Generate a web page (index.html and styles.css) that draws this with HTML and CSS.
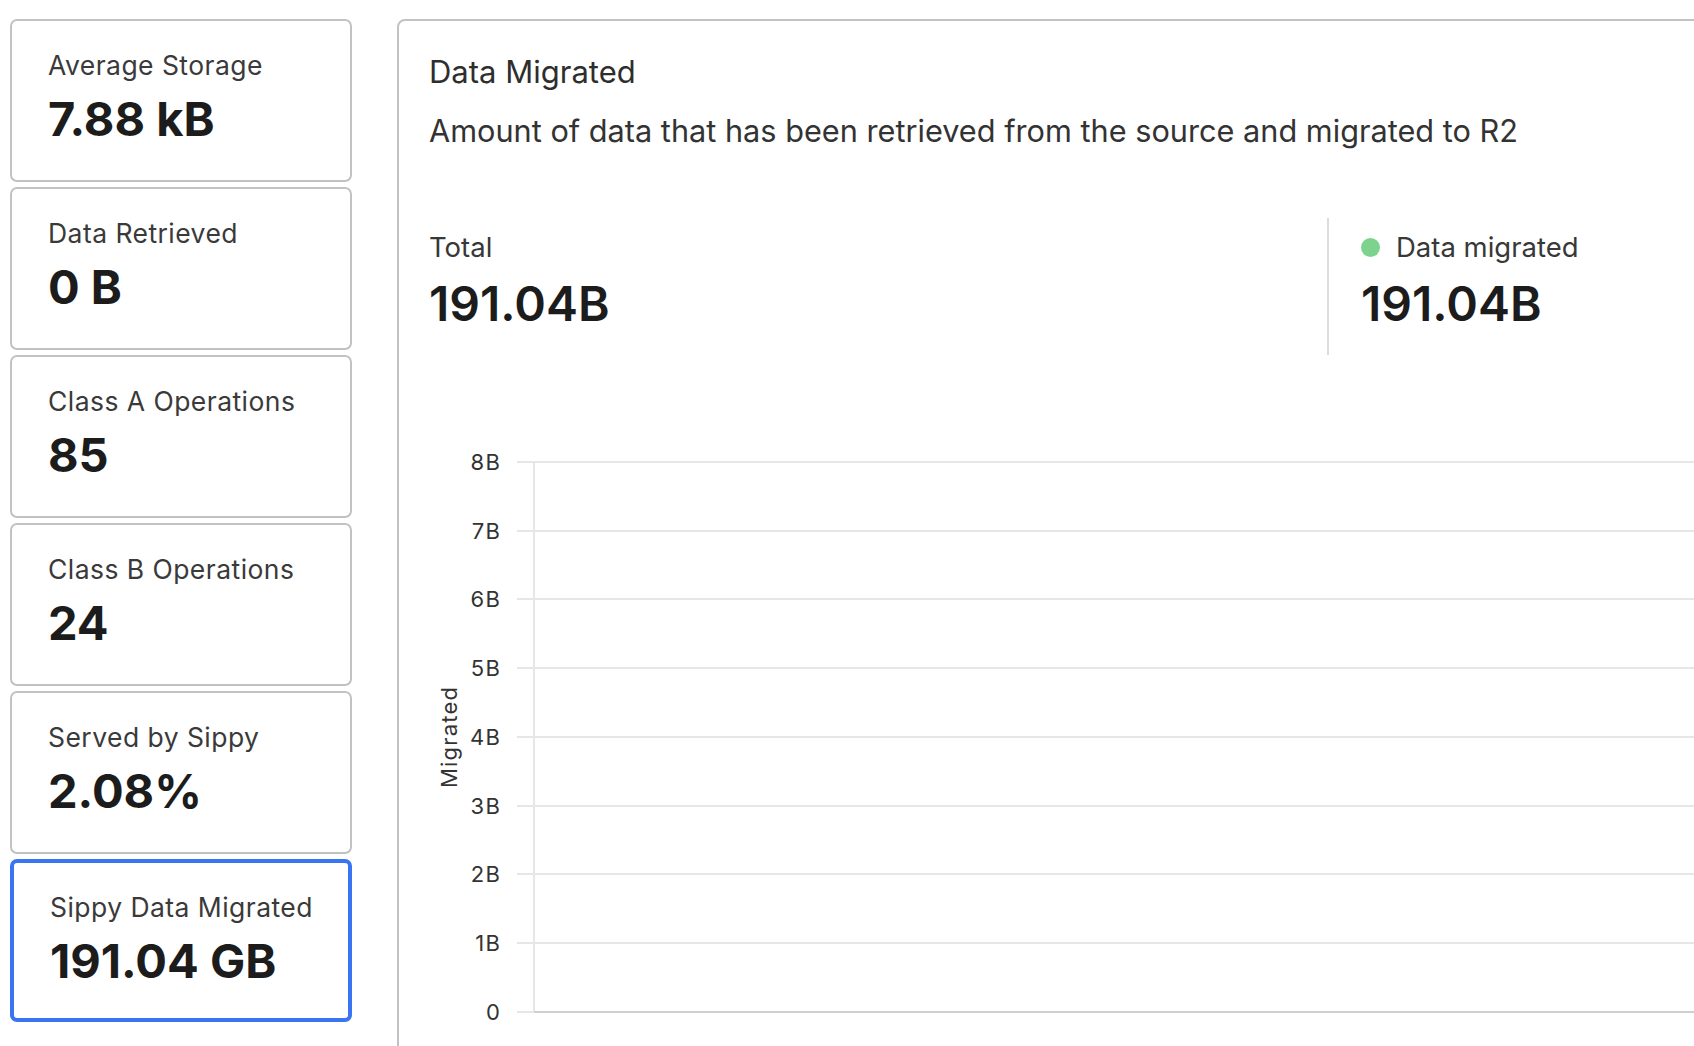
FILE: index.html
```html
<!DOCTYPE html>
<html lang="en">
<head>
    <meta charset="UTF-8">
    <meta name="viewport" content="width=device-width, initial-scale=1.0">
    <title>R2 Migration - Sippy</title>
    <link rel="stylesheet" href="styles.css">
</head>
<body>
    <div class="layout">
        <aside class="sidebar">
            <div class="metric">
                <div class="metric-label">Average Storage</div>
                <div class="metric-value">7.88 kB</div>
            </div>
            <div class="metric">
                <div class="metric-label">Data Retrieved</div>
                <div class="metric-value">0 B</div>
            </div>
            <div class="metric">
                <div class="metric-label">Class A Operations</div>
                <div class="metric-value">85</div>
            </div>
            <div class="metric">
                <div class="metric-label">Class B Operations</div>
                <div class="metric-value">24</div>
            </div>
            <div class="metric">
                <div class="metric-label">Served by Sippy</div>
                <div class="metric-value">2.08%</div>
            </div>
            <div class="metric active">
                <div class="metric-label">Sippy Data Migrated</div>
                <div class="metric-value">191.04 GB</div>
            </div>
        </aside>

        <section class="panel">
            <h2 class="panel-title">Data Migrated</h2>
            <p class="panel-desc">Amount of data that has been retrieved from the source and migrated to R2</p>

            <div class="stats">
                <div class="stat">
                    <div class="stat-label">Total</div>
                    <div class="stat-value">191.04B</div>
                </div>
                <div class="stat stat-series">
                    <div class="stat-label"><span class="dot"></span>Data migrated</div>
                    <div class="stat-value">191.04B</div>
                </div>
            </div>

            <svg class="chart" height="680">
                <text class="axis-title" transform="translate(28 357) rotate(-90)" text-anchor="middle">Migrated</text>

                <g class="grid">
                    <line x1="88" x2="100%" y1="82" y2="82"></line>
                    <line x1="88" x2="100%" y1="151" y2="151"></line>
                    <line x1="88" x2="100%" y1="219" y2="219"></line>
                    <line x1="88" x2="100%" y1="288" y2="288"></line>
                    <line x1="88" x2="100%" y1="357" y2="357"></line>
                    <line x1="88" x2="100%" y1="426" y2="426"></line>
                    <line x1="88" x2="100%" y1="494" y2="494"></line>
                    <line x1="88" x2="100%" y1="563" y2="563"></line>
                    <line x1="88" x2="105" y1="632" y2="632"></line>
                    <line x1="105" x2="105" y1="82" y2="632"></line>
                </g>
                <line class="baseline" x1="105" x2="100%" y1="632" y2="632"></line>

                <g class="ticks" text-anchor="end">
                    <text x="72" y="90">8B</text>
                    <text x="72" y="159">7B</text>
                    <text x="72" y="227">6B</text>
                    <text x="72" y="296">5B</text>
                    <text x="72" y="365">4B</text>
                    <text x="72" y="434">3B</text>
                    <text x="72" y="502">2B</text>
                    <text x="72" y="571">1B</text>
                    <text x="72" y="640">0</text>
                </g>
            </svg>
        </section>
    </div>
</body>
</html>
```

FILE: styles.css
```css
body {
    margin: 0;
    overflow: hidden;
    background: #fff;
    font-family: Inter, "Noto Sans", "Liberation Sans", sans-serif;
    color: #333;
}

.layout {
    display: flex;
    align-items: flex-start;
    gap: 45px;
    padding: 19px 0 0 10px;
}

/* left column of metric cards */
.sidebar {
    display: flex;
    flex-direction: column;
    gap: 5px;
    width: 342px;
    flex-shrink: 0;
}

.metric {
    box-sizing: border-box;
    height: 163px;
    padding: 28px 10px 0 36px;
    border: 2px solid #c2c2c2;
    border-radius: 7px;
    background: #fff;
}

.metric.active {
    border: 4px solid #3a74f0;
}

.metric-label {
    font-size: 26.5px;
    line-height: 32px;
    color: #3a3a3a;
    letter-spacing: 0.45px;
    white-space: nowrap;
}

.metric-value {
    margin-top: 10px;
    font-size: 47px;
    line-height: 56px;
    font-weight: 700;
    color: #1c1c1c;
}

/* chart panel */
.panel {
    box-sizing: border-box;
    flex-shrink: 0;
    width: 1400px;
    height: 1100px;
    padding: 32px 30px 0 30px;
    border: 2px solid #c2c2c2;
    border-radius: 8px;
}

.panel-title {
    margin: 0;
    font-size: 31px;
    line-height: 38px;
    font-weight: 400;
    color: #2e2e2e;
}

.panel-desc {
    margin: 21px 0 0;
    font-size: 30.7px;
    line-height: 38px;
    color: #333;
    white-space: nowrap;
}

.stats {
    display: grid;
    grid-template-columns: 898px 1fr;
    margin-top: 68px;
}

.stat {
    padding: 12px 0 23px;
}

.stat-series {
    border-left: 2px solid #dcdcdc;
    padding-left: 32px;
}

.stat-label {
    display: flex;
    align-items: center;
    gap: 16px;
    font-size: 27.5px;
    line-height: 34px;
    color: #383838;
}

.dot {
    width: 19px;
    height: 19px;
    border-radius: 50%;
    background: #7dd38d;
}

.stat-value {
    margin-top: 12px;
    font-size: 48px;
    line-height: 56px;
    font-weight: 600;
    color: #1c1c1c;
}

.chart {
    display: block;
    width: 100%;
    margin-top: 25px;
    font-family: Inter, "Liberation Sans", sans-serif;
}

.grid line {
    stroke: #e6e6e6;
    stroke-width: 2;
}

.baseline {
    stroke: #cfcfcf;
    stroke-width: 2;
}

.ticks text {
    font-size: 22px;
    fill: #333;
    letter-spacing: 1.2px;
}

.axis-title {
    font-size: 22px;
    fill: #333;
    letter-spacing: 1.2px;
}
```
